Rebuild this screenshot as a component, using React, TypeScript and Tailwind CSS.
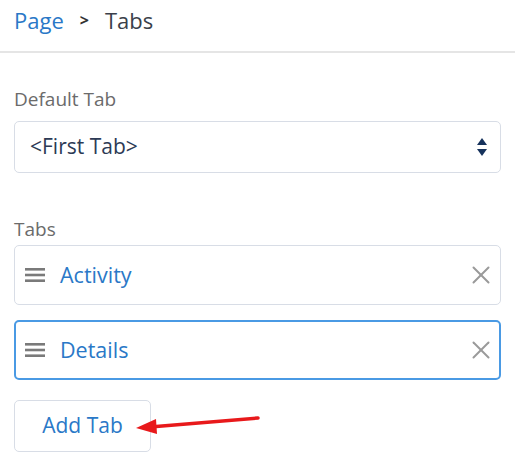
import { X } from "lucide-react";

const TABS = [
  { name: "Activity", focused: false },
  { name: "Details", focused: true },
];

function DragHandle() {
  return (
    <svg width="20" height="14" viewBox="0 0 20 14" className="shrink-0">
      <rect x="0" y="0" width="20" height="2.6" fill="#7a7a7a" />
      <rect x="0" y="5.7" width="20" height="2.6" fill="#7a7a7a" />
      <rect x="0" y="11.4" width="20" height="2.6" fill="#7a7a7a" />
    </svg>
  );
}

export default function App() {
  return (
    <div className="w-[515px] h-[462px] bg-white font-['Open_Sans','Noto_Sans',sans-serif] relative overflow-hidden">
      {/* Breadcrumb */}
      <div className="h-[53px] border-b-2 border-[#e5e5e5] px-[14px] flex items-start gap-[16px] text-[22px] leading-[40px]">
        <span className="text-[#2a78c7]">Page</span>
        <span className="text-[#333] font-bold text-[16px]">&gt;</span>
        <span className="text-[#3a3f4a]">Tabs</span>
      </div>

      <div className="px-[14px]">
        {/* Default Tab */}
        <div className="mt-[33px] text-[19px] text-[#6b6b6b] leading-[26px]">Default Tab</div>
        <div className="mt-[9px] h-[52px] w-[487px] border border-[#d8dde6] rounded-[5px] flex items-center pl-[15px] pr-[13px]">
          <span className="flex-1 text-[21px] text-[#2c3a55]">&lt;First Tab&gt;</span>
          <div className="flex flex-col items-center gap-[4px]">
            <svg width="10" height="7" viewBox="0 0 10 7"><path d="M5 0 L10 7 L0 7 Z" fill="#16325c" /></svg>
            <svg width="10" height="7" viewBox="0 0 10 7"><path d="M0 0 L10 0 L5 7 Z" fill="#16325c" /></svg>
          </div>
        </div>

        {/* Tabs */}
        <div className="mt-[43px] text-[19px] text-[#6b6b6b] leading-[26px]">Tabs</div>
        <div className="mt-[3px] flex flex-col gap-[15px]">
          {TABS.map((t) => (
            <div
              key={t.name}
              className={
                t.focused
                  ? "h-[60px] w-[487px] border-2 border-[#4a9ae4] rounded-[5px] flex items-center pl-[9px] pr-[3px]"
                  : "h-[60px] w-[487px] border border-[#d8dde6] rounded-[5px] flex items-center pl-[10px] pr-[4px]"
              }
            >
              <DragHandle />
              <span className="flex-1 ml-[15px] text-[21.5px] text-[#2a78c7]">{t.name}</span>
              <X size={30} strokeWidth={1.6} color="#9a9a9a" />
            </div>
          ))}
        </div>

        {/* Add Tab */}
        <button className="mt-[20px] h-[52px] w-[137px] border border-[#d8dde6] rounded-[5px] bg-white text-[21px] text-[#2a78c7] flex items-center justify-center">
          Add Tab
        </button>
      </div>

      {/* Annotation arrow */}
      <svg className="absolute left-0 top-0 pointer-events-none" width="515" height="462">
        <line x1="258" y1="418" x2="150" y2="427" stroke="#e8191b" strokeWidth="3.5" strokeLinecap="round" />
        <path d="M136 428 L156 419 L157 434 Z" fill="#e8191b" />
      </svg>
    </div>
  );
}
